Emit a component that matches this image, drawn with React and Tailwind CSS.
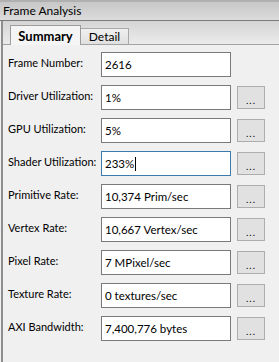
import React from 'react';

const rows = [
  { label: 'Frame Number:', value: '2616', button: false },
  { label: 'Driver Utilization:', value: '1%', button: true },
  { label: 'GPU Utilization:', value: '5%', button: true },
  { label: 'Shader Utilization:', value: '233%', button: true, focused: true },
  { label: 'Primitive Rate:', value: '10,374 Prim/sec', button: true },
  { label: 'Vertex Rate:', value: '10,667 Vertex/sec', button: true },
  { label: 'Pixel Rate:', value: '7 MPixel/sec', button: true },
  { label: 'Texture Rate:', value: '0 textures/sec', button: true },
  { label: 'AXI Bandwidth:', value: '7,400,776 bytes', button: true },
];

function Row({ row }) {
  return (
    <div className="flex items-start h-[25px]">
      <div className="w-[98px] shrink-0 pl-[5px] mt-[3px] text-[11px] leading-[16px] whitespace-nowrap">{row.label}</div>
      <div
        className={`w-[130px] shrink-0 h-[25px] bg-white border flex items-center pl-[3px] text-[11.5px] leading-[16px] ${
          row.focused ? 'border-[#3d7bad]' : 'border-[#7a7a7a]'
        }`}
      >
        <span>{row.value}</span>
        {row.focused && <span className="w-px h-[14px] bg-black ml-px" />}
      </div>
      {row.button && (
        <div className="ml-[6px] mt-px w-[28px] h-[23px] bg-[#e1e1e1] border border-[#adadad] flex items-center justify-center">
          <span className="text-[10px] leading-none tracking-[1px] pt-[4px]">...</span>
        </div>
      )}
    </div>
  );
}

export default function App() {
  return (
    <div className="w-[279px] h-[362px] bg-[#f0f0f0] text-[12px] text-black font-['Lato',sans-serif] flex flex-col overflow-hidden">
      <div className="h-[21px] shrink-0 bg-gradient-to-b from-[#c7c7c7] to-[#dcdcdc] border-t-2 border-t-[#b0b0b0] border-b border-b-[#7c7c7c] pl-[3px] leading-[18px]">
        Frame Analysis
      </div>
      <div className="flex-1 ml-[1px] border-l-2 border-[#8e8e8e] flex flex-col">
        <div className="h-[24px] shrink-0 bg-gradient-to-b from-[#d5d5d5] to-[#ebebeb] border-b border-[#a3a3a3] flex items-end pl-[7px]">
          <div className="h-[20px] w-[71px] -mb-px bg-[#f5f5f5] border border-b-0 border-[#9c9c9c] font-bold text-[13px] flex items-center justify-center leading-[16px]">
            Summary
          </div>
          <div className="h-[16px] w-[48px] bg-gradient-to-b from-[#f0f0f0] to-[#e0e0e0] border border-l-0 border-b-0 border-[#a8a8a8] flex items-center justify-center leading-[16px]">
            Detail
          </div>
        </div>
        <div className="flex flex-col gap-[8px] pt-[7px]">
          {rows.map((r) => (
            <Row key={r.label} row={r} />
          ))}
        </div>
      </div>
    </div>
  );
}
